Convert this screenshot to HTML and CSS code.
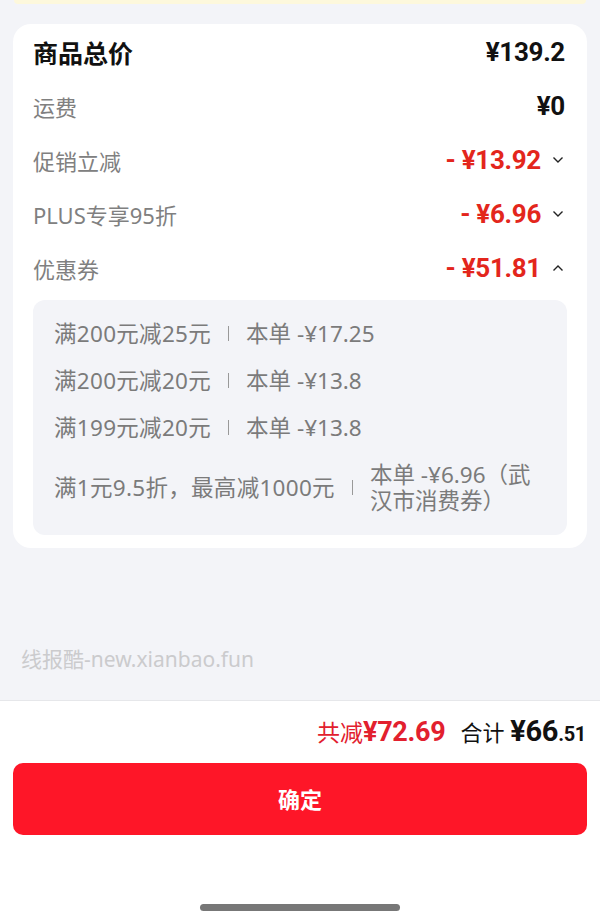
FILE: index.html
```html
<!DOCTYPE html>
<html>
<head>
    <meta charset="UTF-8">
    <title>订单金额明细</title>
    <link rel="stylesheet" href="styles.css">
</head>
<body>

<div class="page">
    <div class="main">
        <div class="notice"></div>

        <div class="card">
            <div class="row row-total">
                <span class="label">商品总价</span>
                <span class="price">¥139.2</span>
            </div>
            <div class="row">
                <span class="label">运费</span>
                <span class="price">¥0</span>
            </div>
            <div class="row">
                <span class="label">促销立减</span>
                <span class="price red">- ¥13.92</span>
                <svg class="arrow" width="12" height="8" viewBox="0 0 12 8"><polyline points="1.5,1.5 6,6 10.5,1.5" fill="none" stroke="#222" stroke-width="1.4"/></svg>
            </div>
            <div class="row">
                <span class="label">PLUS专享95折</span>
                <span class="price red">- ¥6.96</span>
                <svg class="arrow" width="12" height="8" viewBox="0 0 12 8"><polyline points="1.5,1.5 6,6 10.5,1.5" fill="none" stroke="#222" stroke-width="1.4"/></svg>
            </div>
            <div class="row">
                <span class="label">优惠券</span>
                <span class="price red">- ¥51.81</span>
                <svg class="arrow" width="12" height="8" viewBox="0 0 12 8"><polyline points="1.5,6.5 6,2 10.5,6.5" fill="none" stroke="#222" stroke-width="1.4"/></svg>
            </div>

            <div class="coupons">
                <div class="coupon">
                    <span class="c-name">满200元减25元</span>
                    <i class="sep"></i>
                    <span class="c-val">本单 -¥17.25</span>
                </div>
                <div class="coupon">
                    <span class="c-name">满200元减20元</span>
                    <i class="sep"></i>
                    <span class="c-val">本单 -¥13.8</span>
                </div>
                <div class="coupon">
                    <span class="c-name">满199元减20元</span>
                    <i class="sep"></i>
                    <span class="c-val">本单 -¥13.8</span>
                </div>
                <div class="coupon">
                    <span class="c-name">满1元9.5折，最高减1000元</span>
                    <i class="sep"></i>
                    <span class="c-val">本单 -¥6.96（武汉市消费券）</span>
                </div>
            </div>
        </div>

        <div class="watermark">线报酷-new.xianbao.fun</div>
    </div>

    <div class="footer">
        <div class="sum">
            <span class="save">共减<b>¥72.69</b></span>
            <span class="total">合计 <b>¥66<small>.51</small></b></span>
        </div>
        <a href="javascript:;" class="btn">确定</a>
        <div class="home-bar"></div>
    </div>
</div>

</body>
</html>
```

FILE: styles.css
```css
*{ margin: 0; padding: 0; box-sizing: border-box; text-decoration: none;}
body { background: #f3f4f8; font-family: "Noto Sans", "Noto Sans CJK SC", sans-serif; color: #1a1a1a;}
.page { height: 924px; display: flex; flex-direction: column;}
.main { flex: 1;}
.notice { height: 4px; margin: 0 14px; background: #fdf8dc; border-radius: 0 0 10px 10px;}
.card { margin: 20px 13px 0; background: #fff; border-radius: 18px; padding: 1px 20px 13px;}
.row { height: 54px; display: flex; align-items: center; padding-right: 2px;}
.row .label { flex: 1; font-size: 22px; color: #808080;}
.row .latin { letter-spacing: 1px;}
.row-total .label { font-size: 25px; font-weight: bold; color: #111;}
.price { font-family: Roboto, "Noto Sans", sans-serif; font-weight: bold; font-size: 26px; color: #111; letter-spacing: -0.3px;}
.price.red { color: #e3261c;}
.arrow { margin-left: 11px; margin-right: 1px;}
.coupons { margin-top: 5px; background: #f3f4f8; border-radius: 12px; padding: 10px 21px 11px;}
.coupon { display: flex; align-items: center; padding: 10.5px 0; font-size: 22.5px; line-height: 26px; color: #7b7b7b;}
.c-name { flex-shrink: 0; letter-spacing: 0.3px;}
.sep { flex-shrink: 0; width: 1px; height: 15px; background: #999; margin: 0 17px;}
.c-val { flex: 1;}
.watermark { margin: 100px 0 0 21px; font-size: 21px; line-height: 22px; color: #cbcbcd;}
.footer { background: #fff; border-top: 1px solid #e6e7ea; padding: 15px 13px 13px;}
.sum { height: 30px; display: flex; justify-content: flex-end; align-items: center; padding-right: 1px;}
.save { font-size: 23px; color: #e2202e;}
.save b { font-family: Roboto, "Noto Sans", sans-serif; font-size: 27px; letter-spacing: -0.3px;}
.total { margin-left: 15px; font-size: 22px; color: #111;}
.total b { font-family: Roboto, "Noto Sans", sans-serif; font-size: 29px; letter-spacing: -0.3px;}
.total small { font-size: 20px;}
.btn { display: block; margin-top: 17px; height: 72px; line-height: 72px; text-align: center; background: #fe1628; color: #fff; font-size: 22px; font-weight: bold; border-radius: 10px;}
.home-bar { width: 200px; height: 7px; margin: 69px auto 0; background: #777; border-radius: 4px;}
```
